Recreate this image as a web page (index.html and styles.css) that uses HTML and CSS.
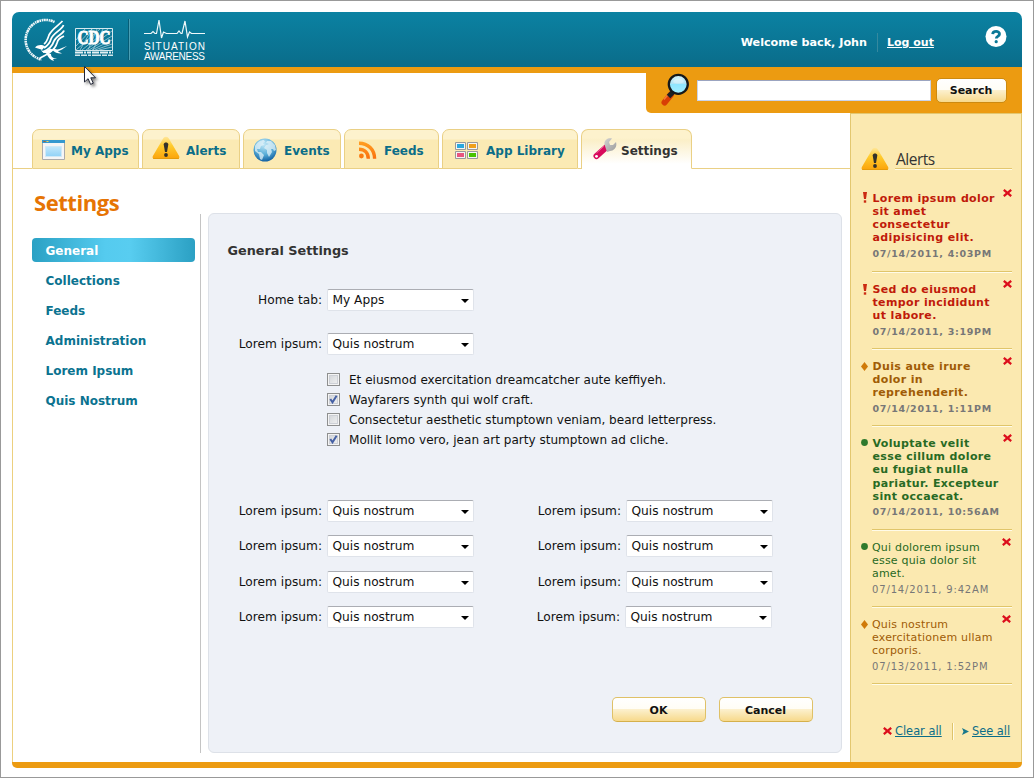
FILE: index.html
```html
<!DOCTYPE html>
<html lang="en">
<head>
<meta charset="utf-8">
<title>Situation Awareness</title>
<link rel="stylesheet" href="styles.css">
</head>
<body>
<svg class="defs" width="0" height="0" aria-hidden="true">
  <defs>
    <linearGradient id="warn" x1="0" y1="0" x2="0" y2="1"><stop offset="0" stop-color="#ffe69a"/><stop offset=".4" stop-color="#ffcb2d"/><stop offset="1" stop-color="#fba30a"/></linearGradient>
    <radialGradient id="globe" cx=".45" cy=".25" r=".8"><stop offset="0" stop-color="#c3e8f7"/><stop offset=".55" stop-color="#5aaed8"/><stop offset="1" stop-color="#07559a"/></radialGradient>
    <linearGradient id="rss" x1="0" y1="0" x2="0" y2="1"><stop offset="0" stop-color="#ff9c20"/><stop offset="1" stop-color="#fa6f0e"/></linearGradient>
    <linearGradient id="lens" x1="0" y1="0" x2="0" y2="1"><stop offset="0" stop-color="#d7f6ff"/><stop offset=".48" stop-color="#b0e4f4"/><stop offset=".5" stop-color="#8fe6ff"/><stop offset="1" stop-color="#a4efff"/></linearGradient>
    <linearGradient id="steel" x1="0" y1="0" x2="1" y2="1"><stop offset="0" stop-color="#d2d2d2"/><stop offset="1" stop-color="#9b9b9b"/></linearGradient>
    <linearGradient id="pane" x1="0" y1="0" x2="0" y2="1"><stop offset="0" stop-color="#c3e8fb"/><stop offset="1" stop-color="#90d2f7"/></linearGradient>
  </defs>
  <symbol id="i-warn" viewBox="0 0 28 24"><path d="M14 .8c1.500 0 2.300.8 3 2L27 19.800c1 1.900.2 3.200-1.800 3.200H2.800C.8 23 0 21.700 1 19.800L11 2.800c.7-1.200 1.500-2 3-2z" fill="url(#warn)"/><path d="M1.200 22.500h25.600" stroke="#e79b08"/><path d="M11.700 8.500c.2-2.600 4.400-2.600 4.600 0L15 16h-2z" fill="#34322a"/><circle cx="14" cy="19" r="1.900" fill="#34322a"/></symbol>
  <symbol id="i-x" viewBox="0 0 9 8"><path d="M.8.800l7.400 6.400M8.200.8L.8 7.200" stroke="#dc0f1c" stroke-width="2.200"/></symbol>
  <symbol id="i-bang" viewBox="0 0 4 11"><path d="M0 0h4L3 7H1z" fill="#cb2a12"/><path d="M.8 8.300h2.400v2.400H.8z" fill="#cb2a12"/></symbol>
  <symbol id="i-diamond" viewBox="0 0 7 9"><path d="M3.500 0L7 4.500 3.500 9 0 4.500z" fill="#d07a08"/></symbol>
  <symbol id="i-dot" viewBox="0 0 7 7"><circle cx="3.500" cy="3.500" r="3.400" fill="#2f7a2d"/></symbol>
</svg>
<div class="app">
  <header class="top">
    <svg class="logo" width="94" height="47" viewBox="0 0 94 47" fill="none">
      <path d="M34 6A20 20 0 1 0 21 43.500" stroke="#eef6f8" stroke-width="2.600" stroke-dasharray="1.600 .5 2.300 .5 1.300 .7" transform="translate(-1.500 0)"/>
      <path d="M40.500 5C37 9 30 13 27 19 26 22 25 26 22 28" stroke="#fff" stroke-width="1.700"/>
      <path d="M41.500 9C40 14 31 17 29 23 28 27 25 30 22 32" stroke="#fff" stroke-width="1.800"/>
      <path d="M42 14.500C41 18 34 20 32 25 30 31 26 34 21 36" stroke="#fff" stroke-width="1.900"/>
      <path d="M42 20C38 22 36 23 35 27 33 34 26 38 18 42" stroke="#fff" stroke-width="1.800"/>
      <path d="M13 31.500c3-3 7-3 10-1l-3 3.500c-2-1.500-4-1-7-2.500zM19 34c3 2 6 1 9-1.500l3 1c-3 5-10 5-12 .5zM31 32c5 3.500 9-.5 14-2-4 2.500-5 4.500-9 5 1 1.500 3 1.500 4 2.500-4 .5-7-1-9-3zM24 37l5 1c0 4 3 4 6 4.500l-4 .5 1 2c-4-1-6-4-8-8z" fill="#fff"/>
      <path d="M53.500 12.500h37v22h-37z" stroke="#d6e9ee"/>
      <g stroke="#b9d9e2" stroke-width=".7"><path d="M54 24l9-11M54 30l16-17M54 34l24-21M60 34l26-21M64 34l26-19M67 34l23-14M70 34l20-10M73 34l17-6M77 34l13-3M58 34l12-21M66 34l9-21M71 34l10-21"/></g>
      <text x="72" y="28.300" text-anchor="middle" class="cdc" textLength="33" lengthAdjust="spacingAndGlyphs">CDC</text>
      <path d="M53 36.500h38" stroke="#e3f0f3" stroke-width="1.800" stroke-dasharray="8 1 2 1 4 1 7 1"/>
      <path d="M53 39.300h38" stroke="#d4e7ec" stroke-width="1.500" stroke-dasharray="5 1 6 1 3 1 9 1"/>
    </svg>
    <div class="brand">
      <svg width="62" height="21" viewBox="0 0 62 21" fill="none" stroke="#eff8fa" stroke-width="1.200"><path d="M0 14.500h7l2-2 2 2h1.500L15 1l2.500 18 2-6 3 1.500H33l2-2.500 2 2.500h1L41 2l2.500 16 2-5 2 1.500H61"/></svg>
      <svg width="63" height="22" viewBox="0 0 63 22" class="brand-text"><text x="1" y="8.500" textLength="61">SITUATION</text><text x="1" y="18.800" textLength="61">AWARENESS</text></svg>
    </div>
    <div class="user"><b class="hello">Welcome back, John</b><a class="logout">Log out</a></div>
    <svg class="help" width="22" height="22" viewBox="0 0 22 22"><circle cx="11" cy="10.500" r="10.500" fill="#fff"/><path d="M7.700 8.200c.2-3.600 6.800-3.600 6.800-.2 0 2.500-3.200 2.300-3.200 4.400" fill="none" stroke="#0b7896" stroke-width="2.800"/><circle cx="11.200" cy="15.700" r="1.600" fill="#0b7896"/></svg>
  </header>
  <div class="search-row">
    <div class="search">
      <svg width="30" height="34" viewBox="0 0 30 34"><path d="M11 21.500l-6.500 8" stroke="#d83e05" stroke-width="6" stroke-linecap="round"/><path d="M4 26.500l4.500-5.500" stroke="#f87934" stroke-width="1.500"/><path d="M8.500 23.500l5-5" stroke="#1c2022" stroke-width="5"/><circle cx="18.300" cy="11.300" r="9.500" fill="url(#lens)" stroke="#15191c" stroke-width="2.300"/><path d="M13 9c2-5 9-5 11 0-3 2-8 2-11 0z" fill="#fff" opacity=".35"/></svg>
      <div class="query"></div>
      <div class="btn btn-search">Search</div>
    </div>
  </div>
  <div class="main">
    <div class="content">
      <nav class="tabs">
        <div class="tab t1"><svg width="23" height="20" viewBox="0 0 23 20"><path d="M.5.500h22v19H.5z" fill="#f5f5f5" stroke="#aaa"/><path d="M0 0h23v3H0z" fill="#3498cf"/><path d="M1.500 1.500h2" stroke="#b95e20"/><path d="M4.500 1.500h2" stroke="#ffd44d"/><path d="M3.500 6.500h16v10h-16z" fill="url(#pane)" stroke="#cfe9f7"/></svg><span>My Apps</span></div>
        <div class="tab t2"><svg width="28" height="24"><use href="#i-warn"/></svg><span>Alerts</span></div>
        <div class="tab t3"><svg width="24" height="24" viewBox="0 0 24 24"><circle cx="12" cy="12" r="11.500" fill="url(#globe)"/><path d="M2 8c2-4 6-6 9-6l1 2-2 1 1 2-3 1-1 3-3 0 1 3 3 0 3 3-2 5-2-1-1-5-4-3zM14 3l4 0 4 4 1 5-2 1-1-2-2 0 1 3-3 5-2-4 0-3-3-2 2-3 3-1-3-1z" fill="#e2f2f8" opacity=".75"/></svg><span>Events</span></div>
        <div class="tab t4"><svg width="18" height="18" viewBox="0 0 18 18" fill="none" stroke="url(#rss)" stroke-width="3.400"><circle cx="2.400" cy="15" r="2.400" fill="#fa7b10" stroke="none"/><path d="M0 8.200c5.600 0 9.300 3.700 9.300 9.600M0 2.200c9 0 15.600 6.200 15.600 15.600"/></svg><span>Feeds</span></div>
        <div class="tab t5"><svg width="23" height="17" viewBox="0 0 23 17" stroke="#999"><g fill="#f5f5f5"><path d="M.5.500h10v7H.5zM12.500.500h10v7h-10zM.5 9.500h10v7H.5zM12.500 9.500h10v7h-10z"/></g><g stroke="none"><path d="M2 2h7v4H2z" fill="#2ba8df"/><path d="M14 2h7v4h-7z" fill="#efa01c"/><path d="M2 11h7v4H2z" fill="#e8557e"/><path d="M14 11h7v4h-7z" fill="#49c300"/></g></svg><span>App Library</span></div>
        <div class="tab t6 on"><svg width="24" height="22" viewBox="0 0 24 22"><path d="M3.500 18L13 9.500" stroke="#d80b5c" stroke-width="6" stroke-linecap="round"/><path d="M3.500 15L11 8.200" stroke="#ee5d98" stroke-width="1"/><circle cx="3.500" cy="18.300" r="1.400" fill="#fff"/><path d="M12 8c-2-5 2-8.500 7-7.500l-3 3.500 1 3 3 0 3-3c1.500 5-2 9-6 9l-3 1z" fill="url(#steel)"/></svg><span>Settings</span></div>
        <div class="tab-rest"></div>
      </nav>
      <div class="cols">
        <aside class="left">
          <h1>Settings</h1>
          <ul class="menu"><li class="sel">General</li><li>Collections</li><li>Feeds</li><li>Administration</li><li>Lorem Ipsum</li><li>Quis Nostrum</li></ul>
        </aside>
        <section class="panel">
          <h2>General Settings</h2>
          <div class="field f1"><label>Home tab:</label><div class="select">My Apps</div></div>
          <div class="field f2"><label>Lorem ipsum:</label><div class="select">Quis nostrum</div></div>
          <div class="checks">
            <div class="check"><i class="box"></i><span>Et eiusmod exercitation dreamcatcher aute keffiyeh.</span></div>
            <div class="check"><i class="box ticked"><svg width="9" height="9" viewBox="0 0 9 9"><path d="M1.300 4l2.200 3.300L7.600.8" fill="none" stroke="#4560a4" stroke-width="2"/></svg></i><span>Wayfarers synth qui wolf craft.</span></div>
            <div class="check"><i class="box"></i><span>Consectetur aesthetic stumptown veniam, beard letterpress.</span></div>
            <div class="check"><i class="box ticked"><svg width="9" height="9" viewBox="0 0 9 9"><path d="M1.300 4l2.200 3.300L7.600.8" fill="none" stroke="#4560a4" stroke-width="2"/></svg></i><span>Mollit lomo vero, jean art party stumptown ad cliche.</span></div>
          </div>
          <div class="pairs">
            <div class="field"><label>Lorem ipsum:</label><div class="select">Quis nostrum</div></div><div class="field"><label>Lorem ipsum:</label><div class="select">Quis nostrum</div></div>
            <div class="field"><label>Lorem ipsum:</label><div class="select">Quis nostrum</div></div><div class="field"><label>Lorem ipsum:</label><div class="select">Quis nostrum</div></div>
            <div class="field"><label>Lorem ipsum:</label><div class="select">Quis nostrum</div></div><div class="field"><label>Lorem ipsum:</label><div class="select">Quis nostrum</div></div>
            <div class="field"><label>Lorem ipsum:</label><div class="select">Quis nostrum</div></div><div class="field last"><label>Lorem ipsum:</label><div class="select">Quis nostrum</div></div>
          </div>
          <div class="actions"><div class="btn">OK</div><div class="btn">Cancel</div></div>
        </section>
      </div>
    </div>
    <aside class="alerts">
      <div class="alerts-head"><svg width="28" height="24"><use href="#i-warn"/></svg><h3>Alerts</h3></div>
      <div class="alert red bold four"><svg class="mark" width="4" height="11"><use href="#i-bang"/></svg><div class="msg"><p>Lorem ipsum dolor<br>sit amet<br>consectetur<br>adipisicing elit.</p><time>07/14/2011, 4:03PM</time></div><svg class="x" width="9" height="8"><use href="#i-x"/></svg></div>
      <div class="alert red bold"><svg class="mark" width="4" height="11"><use href="#i-bang"/></svg><div class="msg"><p>Sed do eiusmod<br>tempor incididunt<br>ut labore.</p><time>07/14/2011, 3:19PM</time></div><svg class="x" width="9" height="8"><use href="#i-x"/></svg></div>
      <div class="alert amber bold"><svg class="mark" width="7" height="9"><use href="#i-diamond"/></svg><div class="msg"><p>Duis aute irure<br>dolor in<br>reprehenderit.</p><time>07/14/2011, 1:11PM</time></div><svg class="x" width="9" height="8"><use href="#i-x"/></svg></div>
      <div class="alert green bold five"><svg class="mark" width="7" height="7"><use href="#i-dot"/></svg><div class="msg"><p>Voluptate velit<br>esse cillum dolore<br>eu fugiat nulla<br>pariatur. Excepteur<br>sint occaecat.</p><time>07/14/2011, 10:56AM</time></div><svg class="x" width="9" height="8"><use href="#i-x"/></svg></div>
      <div class="alert green plain"><svg class="mark" width="7" height="7"><use href="#i-dot"/></svg><div class="msg"><p>Qui dolorem ipsum<br>esse quia dolor sit<br>amet.</p><time>07/14/2011, 9:42AM</time></div><svg class="x" width="9" height="8"><use href="#i-x"/></svg></div>
      <div class="alert amber plain"><svg class="mark" width="7" height="9"><use href="#i-diamond"/></svg><div class="msg"><p>Quis nostrum<br>exercitationem ullam<br>corporis.</p><time>07/13/2011, 1:52PM</time></div><svg class="x" width="9" height="8"><use href="#i-x"/></svg></div>
      <div class="alerts-foot"><svg width="9" height="8"><use href="#i-x"/></svg><a class="clear">Clear all</a><i class="rule"></i><svg width="7" height="7" viewBox="0 0 7 7"><path d="M0 0l7 3.500L0 7l1.500-3.500z" fill="#18788c"/></svg><a>See all</a></div>
    </aside>
  </div>
  <div class="bottom"></div>
</div>
<svg class="cursor" width="20" height="26" viewBox="0 0 20 26"><path d="M.5.500v15.500l3.600-3.300 2.500 5.700 2.700-1.200-2.500-5.400h4.700z" fill="#fff" stroke="#222738"/></svg>
</body>
</html>
```
FILE: styles.css
```css
* { box-sizing: border-box; }
html, body { margin: 0; height: 100%; }
body { width: 1034px; height: 778px; border: 1px solid #999; padding: 11px; background: #fff; overflow: hidden; position: relative; font-family: "DejaVu Sans", Verdana, sans-serif; font-size: 12px; color: #111; white-space: nowrap; }
h1, h2, h3, p, ul { margin: 0; padding: 0; list-style: none; }
svg { display: block; flex: none; }
.defs { position: absolute; }
.app { width: 1010px; height: 756px; display: flex; flex-direction: column; }

.top { height: 61px; flex: none; border-bottom: 6px solid #ec9b11; border-radius: 7px 7px 0 0; background: linear-gradient(#0b82a2, #0a6c8a) padding-box; display: flex; align-items: flex-start; }
.logo { margin: 4px 0 0 10px; overflow: visible; }
.cdc { font: bold 18px "Liberation Serif", serif; fill: #fff; stroke: #fff; stroke-width: .9px; }
.brand { height: 41px; margin: 7px 0 0 12px; padding-left: 14px; border-left: 1px solid #075d76; box-shadow: inset 1px 0 #4a9fb5; }
.brand svg:first-child { margin: 0 0 1px 1px; }
.brand-text text { font: 10px "Liberation Sans", sans-serif; fill: #fff; }
.user { margin: 21px 0 0 auto; display: flex; font-size: 11.200px; font-weight: bold; color: #fff; line-height: 19px; }
.hello { padding-right: 10px; border-right: 1px solid #35899f; }
.logout { margin-left: 9px; width: 46px; text-decoration: underline; font-size: 11px; }
.help { margin: 14px 15px 0 52px; }

.search-row { height: 40px; flex: none; display: flex; justify-content: flex-end; border-left: 1px solid #ecd07f; }
.search { width: 376px; background: #ec9b11; border-radius: 0 0 0 5px; display: flex; align-items: flex-start; }
.search svg { margin: 0 0 0 14px; }
.query { width: 234px; height: 21px; margin: 7px 5px 0 7px; background: #fff; border: 1px solid #c9d3ea; border-top-color: #9ba4c0; }
.btn { width: 94px; height: 25px; padding-right: 1px; border: 1px solid #dfc167; border-bottom-color: #d5b04b; border-radius: 5px; background: linear-gradient(#fff, #fffdf5 47%, #fcf0cd 50%, #f7d98b); font-size: 11px; font-weight: bold; color: #111; text-align: center; line-height: 25px; }
.btn-search { width: 71px; margin-top: 5px; border-color: #cc8a10; line-height: 23px; }

.main { flex: 1; display: flex; min-height: 0; }
.content { width: 838px; border-left: 1px solid #ecd07f; padding-top: 16px; }
.tabs { display: flex; height: 40px; }
.tabs::before { content: ""; width: 19px; border-bottom: 1px solid #ead085; }
.tab { height: 40px; border: 1px solid #ead085; border-radius: 7px 7px 0 0; background: linear-gradient(#fdf2cd 0 9px, #fbeab4 10px); display: flex; align-items: center; font-size: 12px; font-weight: bold; color: #0b6d88; position: relative; padding-top: 3px; }
.tab svg { margin-top: -1px; }
.tab + .tab { margin-left: 3px; }
.tab + .tab::before { content: ""; position: absolute; left: -4px; bottom: -1px; width: 4px; height: 1px; background: #ead085; }
.t1 { width: 107px; padding-left: 9px; } .t1 span { margin-left: 6px; }
.t2 { width: 98px; padding-left: 9px; } .t2 span { margin-left: 6px; } .t2 svg { margin-top: -6px; }
.t3 { width: 98px; padding-left: 9px; } .t3 span { margin-left: 7px; }
.t4 { width: 95px; padding-left: 14px; } .t4 span { margin-left: 7px; }
.t5 { width: 136px; padding-left: 12px; } .t5 span { margin-left: 8px; }
.t6 { width: 111px; padding-left: 11px; } .t6 span { margin-left: 4px; } .t6 svg { margin-top: -3px; }
.tab.on { background: linear-gradient(#fdf2cd 0 8px, #fbefc8 10px, #fff 34px); border-bottom-color: #fff; color: #333; }
.tab-rest { flex: 1; border-bottom: 1px solid #ead085; }

.cols { display: flex; padding: 22px 0 0 19px; }
.left { width: 169px; height: 562px; position: relative; }
.left::after { content: ""; position: absolute; right: 0; top: 23px; width: 1px; height: 539px; background: #c4c4c4; }
h1 { font: bold 22px/28px "Open Sans", sans-serif; letter-spacing: -.45px; color: #e67404; padding-left: 2px; margin: -3px 0 22px; }
.menu li { height: 24px; width: 163px; margin-bottom: 6px; padding-left: 13.500px; line-height: 26px; border-radius: 4px; font-size: 12px; font-weight: bold; color: #0b7390; }
.menu .sel { color: #fff; background: linear-gradient(90deg, #2aa1c4, #55cbef 45%, #58cdf0 60%, #2ba0c3); }
.panel { margin: 22px 0 0 7px; width: 634px; height: 540px; border: 1px solid #dde1e8; border-radius: 6px; background: #eef1f7; padding: 29px 0 0 18px; font-size: 12.200px; }
h2 { font-size: 12.800px; line-height: 16px; color: #333; padding-left: .5px; }
.field { display: flex; align-items: flex-start; height: 22px; line-height: 22px; }
.field label { width: 95px; text-align: right; margin-right: 5px; }
.select { width: 147px; height: 22px; border: 1px solid #dfe3ea; border-top-color: #abadb3; border-radius: 2px; background: #fff; padding-left: 4.500px; line-height: 20px; display: flex; justify-content: space-between; }
.select::after { content: ""; border: solid transparent; border-width: 4px 4px 0; border-top-color: #000; margin: 9px 4px 0 0; height: 0; }
.f1 { margin-top: 30px; }
.f2 { margin-top: 22px; }
.checks { margin: 14px 0 0 100px; font-size: 12.050px; }
.check { display: flex; height: 20px; align-items: center; line-height: 20px; }
.check span { padding-top: 1px; }
.box { width: 13px; height: 13px; margin-right: 9px; border: 1px solid #8e8f8f; background: linear-gradient(135deg, #cfd2d6, #f4f4f4); box-shadow: inset 0 0 0 1px #f4f4f4, inset 0 0 0 2px #cdd0d6; padding: 1px; }
.pairs { margin-top: 51px; display: grid; grid-template-columns: 299px 247px; grid-auto-rows: 35.400px; }
.last { margin-left: -1px; }
.actions { display: flex; gap: 13px; margin: 55px 0 0 385px; }

.alerts { width: 172px; background: #fbe9b0; border: 1px solid #e3c76f; border-bottom: 0; padding: 33px 0 0 10px; position: relative; }
.alerts-head { display: flex; height: 34px; }
h3 { width: 117px; height: 22px; margin-left: 6px; padding-left: 1px; font: 15.500px/24px "Open Sans", sans-serif; letter-spacing: -.5px; color: #333; border-bottom: 1px solid #e3c76f; box-shadow: 0 1px #fffbe8; }
.alert { height: 77px; width: 151px; position: relative; display: flex; padding: 10px 0 0 11.500px; font-size: 11px; letter-spacing: .36px; }
.alert::after { content: ""; position: absolute; right: 0; bottom: 0; width: 140px; height: 2px; background: linear-gradient(#e0c56a 50%, #fffbe8 50%); }
.four { height: 92px; } .five { height: 104px; }
.four p { padding-top: .5px; }
.alert p { line-height: 13.200px; }
.alert time { display: block; line-height: 14px; margin-top: 2.400px; color: #777; font-size: 9.500px; letter-spacing: .7px; }
.plain { letter-spacing: .2px; padding-left: 11px; }
.plain time { font-size: 10px; letter-spacing: .85px; }
.mark { position: absolute; left: 0; top: 12px; }
.alert .mark[width="4"] { left: 1.500px; top: 11px; }
.x { position: absolute; right: 0; top: 7px; }
.four .x { top: 8px; }
.plain .x { right: 1px; }
.bold { font-weight: bold; }
.red { color: #c01a0a; } .amber { color: #a05c06; } .green { color: #286a24; }
.alerts-foot { display: flex; align-items: center; height: 18px; margin: 37px 0 0 22px; font-size: 11.400px; color: #0b6d88; }
.alerts-foot a { margin-left: 3px; text-decoration: underline; }
.clear { width: 48px; }
.rule { width: 2px; height: 17px; margin: 0 8px 0 9px; background: linear-gradient(90deg, #dec36a 50%, #fffbe8 50%); }
.bottom { height: 6px; flex: none; background: #ec9b11; border-radius: 0 0 5px 5px; }
.cursor { position: absolute; left: 83px; top: 65px; filter: drop-shadow(2px 2px 1.500px rgba(0,0,0,.5)); }
```
